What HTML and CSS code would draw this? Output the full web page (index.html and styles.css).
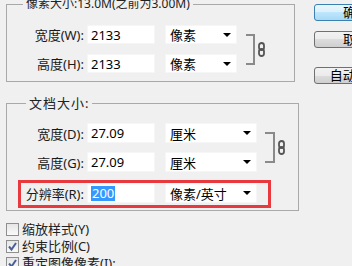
FILE: index.html
```html
<!DOCTYPE html>
<html>
<head>
<meta charset="utf-8">
<link rel="stylesheet" href="styles.css">
</head>
<body>
<div class="dialog">
  <div class="main">
    <fieldset class="group g1">
      <legend>像素大小:13.0M(之前为3.00M)</legend>
      <div class="block">
        <div class="rows">
          <div class="row">
            <span class="label">宽度(W):</span>
            <span class="input">2133</span>
            <span class="select s1">像素<i class="arrow"></i></span>
          </div>
          <div class="row">
            <span class="label">高度(H):</span>
            <span class="input">2133</span>
            <span class="select s1">像素<i class="arrow"></i></span>
          </div>
        </div>
        <div class="link">
          <span class="bracket b1"></span>
          <svg class="chain" width="7" height="15" viewBox="0 0 7 15"><rect x="1" y="1" width="5" height="7" rx="2.5" fill="none" stroke="#555" stroke-width="1.8"/><rect x="1" y="7" width="5" height="7" rx="2.5" fill="none" stroke="#555" stroke-width="1.8"/></svg>
        </div>
      </div>
    </fieldset>
    <fieldset class="group g2">
      <legend>文档大小:</legend>
      <div class="block">
        <div class="rows">
          <div class="row">
            <span class="label">宽度(D):</span>
            <span class="input">27.09</span>
            <span class="select s2">厘米<i class="arrow"></i></span>
          </div>
          <div class="row">
            <span class="label">高度(G):</span>
            <span class="input">27.09</span>
            <span class="select s2">厘米<i class="arrow"></i></span>
          </div>
        </div>
        <div class="link l2">
          <span class="bracket b2"></span>
          <svg class="chain" width="7" height="15" viewBox="0 0 7 15"><rect x="1" y="1" width="5" height="7" rx="2.5" fill="none" stroke="#555" stroke-width="1.8"/><rect x="1" y="7" width="5" height="7" rx="2.5" fill="none" stroke="#555" stroke-width="1.8"/></svg>
        </div>
      </div>
      <div class="highlight">
        <div class="row">
          <span class="label">分辨率(R):</span>
          <span class="input"><span class="sel">200</span></span>
          <span class="select s2">像素/英寸<i class="arrow"></i></span>
        </div>
      </div>
    </fieldset>
    <div class="checks">
      <label class="check"><span class="box"></span>缩放样式(Y)</label>
      <label class="check"><span class="box on"><svg width="11" height="11" viewBox="0 0 11 11"><path d="M2 5.5 L4.5 8.5 L9 2" fill="none" stroke="#4a5f97" stroke-width="2"/></svg></span>约束比例(C)</label>
      <label class="check"><span class="box on"><svg width="11" height="11" viewBox="0 0 11 11"><path d="M2 5.5 L4.5 8.5 L9 2" fill="none" stroke="#4a5f97" stroke-width="2"/></svg></span>重定图像像素(I):</label>
    </div>
  </div>
  <div class="buttons">
    <button class="btn default">确定</button>
    <button class="btn">取消</button>
    <button class="btn auto">自动(A)...</button>
  </div>
</div>
</body>
</html>
```
FILE: styles.css
```css
html, body {
  margin: 0;
  padding: 0;
  background: #f0f0f0;
  width: 352px;
  height: 266px;
  overflow: hidden;
}
body {
  font-family: "Noto Sans", "Noto Sans CJK SC", sans-serif;
  font-size: 13px;
  color: #1a1a1a;
}
.dialog {
  display: flex;
  align-items: flex-start;
}
.main {
  width: 293px;
  margin-left: 6px;
  flex: none;
}
.group {
  margin: 0;
  border: 1px solid #a9a9a9;
  padding: 0 0 0 14px;
  min-width: 0;
}
.group legend {
  margin-left: 2px;
  padding: 0 3px;
  height: 18px;
  line-height: 18px;
  color: #222;
}
.g1 legend {
  font-size: 12px;
  line-height: 16px;
  height: 16px;
}
.g2 legend {
  letter-spacing: 1px;
  margin-left: 5px;
}
.g1 {
  margin-top: -4px;
  width: 289px;
  box-sizing: border-box;
  padding-top: 13px;
  padding-bottom: 8px;
}
.g2 {
  margin-top: 12px;
  width: 293px;
  box-sizing: border-box;
  padding-top: 11px;
  padding-bottom: 2px;
}
.block {
  display: flex;
  align-items: center;
}
.rows {
  display: flex;
  flex-direction: column;
  gap: 10px;
}
.g2 .rows {
  gap: 9px;
}
.row {
  display: flex;
  align-items: center;
  height: 20px;
}
.g1 .row {
  height: 19px;
}
.label {
  width: 63px;
  text-align: right;
  margin-right: 3px;
  white-space: nowrap;
}
.input {
  width: 68px;
  height: 100%;
  box-sizing: border-box;
  background: #fff;
  border: 1px solid #f6f6f6;
  padding-left: 3px;
  display: flex;
  align-items: center;
  color: #000;
}
.sel {
  background: #3399ff;
  color: #fff;
  padding: 0 1px;
  line-height: 15px;
}
.select {
  margin-left: 10px;
  height: 100%;
  box-sizing: border-box;
  background: #fff;
  border: 1px solid #f6f6f6;
  padding-left: 4px;
  display: flex;
  align-items: center;
  position: relative;
  color: #000;
}
.s1 { width: 72px; }
.s2 { width: 92px; }
.arrow {
  position: absolute;
  right: 5px;
  top: 50%;
  margin-top: -2px;
  width: 0;
  height: 0;
  border-left: 4px solid transparent;
  border-right: 4px solid transparent;
  border-top: 4px solid #000;
}
.link {
  display: flex;
  align-items: center;
  margin-left: 9px;
}
.l2 {
  margin-left: 8px;
}
.bracket {
  display: block;
  width: 9px;
  border: 2px solid #8a8a8a;
  border-left: none;
  box-sizing: border-box;
}
.b1 { height: 31px; }
.b2 { height: 31px; width: 10px; }
.chain {
  margin-left: 3px;
}
.highlight {
  margin-top: 8px;
  margin-left: -3px;
  width: 253px;
  box-sizing: border-box;
  border: 3px solid #e8393f;
  padding-bottom: 2px;
}
.checks {
  margin-top: 12px;
  display: flex;
  flex-direction: column;
  gap: 4px;
}
.check {
  display: flex;
  align-items: center;
  height: 13px;
  line-height: 13px;
  color: #222;
}
.box {
  width: 13px;
  height: 13px;
  box-sizing: border-box;
  border: 1px solid #8e8f8f;
  background: linear-gradient(#e6e6e6, #fafafa);
  margin-right: 3px;
  display: flex;
  align-items: center;
  justify-content: center;
}
.buttons {
  margin-left: 15px;
  display: flex;
  flex-direction: column;
  flex: none;
}
.btn {
  width: 84px;
  height: 17px;
  box-sizing: border-box;
  border: 1px solid #707070;
  border-radius: 3px;
  background: linear-gradient(#f2f2f2, #ebebeb 50%, #dddddd 50%, #cfcfcf);
  font-family: "Noto Sans", "Noto Sans CJK SC", sans-serif;
  font-size: 13px;
  line-height: 15px;
  padding: 0;
  color: #000;
  margin-top: 10px;
}
.btn.default {
  margin-top: 4px;
  border-color: #3c7fb1;
  background: linear-gradient(#eaf6fd, #d9f0fc 50%, #bee6fd 50%, #a7d9f5);
}
.btn.auto {
  margin-top: 19px;
}
```
